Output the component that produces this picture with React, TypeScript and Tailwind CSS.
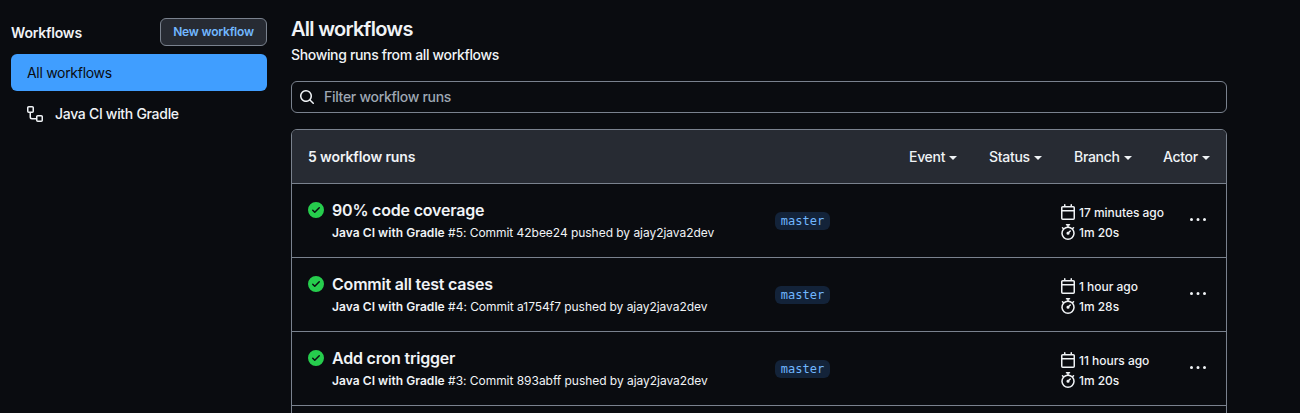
import React from "react";

const PATHS = {
  workflow:
    "M0 1.75C0 .784.784 0 1.75 0h3.5C6.216 0 7 .784 7 1.75v3.5A1.75 1.75 0 015.25 7H4v4a1 1 0 001 1h4v-1.25C9 9.784 9.784 9 10.75 9h3.5c.966 0 1.75.784 1.75 1.75v3.5A1.75 1.75 0 0114.25 16h-3.5A1.75 1.75 0 019 14.25v-.75H5A2.5 2.5 0 012.5 11V7h-.75A1.75 1.75 0 010 5.25v-3.5zm1.75-.25a.25.25 0 00-.25.25v3.5c0 .138.112.25.25.25h3.5a.25.25 0 00.25-.25v-3.5a.25.25 0 00-.25-.25h-3.5zm9 9a.25.25 0 00-.25.25v3.5c0 .138.112.25.25.25h3.5a.25.25 0 00.25-.25v-3.5a.25.25 0 00-.25-.25h-3.5z",
  search:
    "M11.5 7a4.499 4.499 0 11-8.998 0A4.499 4.499 0 0111.5 7zm-.82 4.74a6 6 0 111.06-1.06l3.04 3.04a.75.75 0 11-1.06 1.06l-3.04-3.04z",
  check:
    "M8 16A8 8 0 108 0a8 8 0 000 16zm3.78-9.72a.75.75 0 00-1.06-1.06L6.75 9.19 5.28 7.72a.75.75 0 00-1.06 1.06l2 2a.75.75 0 001.06 0l4.5-4.5z",
  calendar:
    "M4.75 0a.75.75 0 01.75.75V2h5V.75a.75.75 0 011.5 0V2h1.25c.966 0 1.75.784 1.75 1.75v10.5A1.75 1.75 0 0113.25 16H2.75A1.75 1.75 0 011 14.25V3.75C1 2.784 1.784 2 2.75 2H4V.75A.75.75 0 014.75 0zm-2 3.5h10.5a.25.25 0 01.25.25V6h-11V3.75a.25.25 0 01.25-.25zM2.5 7.5v6.75c0 .138.112.25.25.25h10.5a.25.25 0 00.25-.25V7.5h-11z",
  stopwatch:
    "M5.75.75A.75.75 0 016.5 0h3a.75.75 0 010 1.5h-.75v1l-.001.041a6.718 6.718 0 013.464 1.435l.007-.006.75-.75a.75.75 0 111.06 1.06l-.75.75-.006.007a6.75 6.75 0 11-10.548 0L2.72 5.03l-.75-.75a.75.75 0 011.06-1.06l.75.75.007.006A6.718 6.718 0 017.25 2.541a.756.756 0 010-.041v-1H6.5a.75.75 0 01-.75-.75zM8 14.5A5.25 5.25 0 108 4a5.25 5.25 0 000 10.5zm.389-6.7l1.33-1.33a.75.75 0 111.061 1.06L9.45 8.861A1.502 1.502 0 018 10.75a1.5 1.5 0 11.389-2.95z",
  kebab:
    "M8 9a1.5 1.5 0 100-3 1.5 1.5 0 000 3zM1.5 9a1.5 1.5 0 100-3 1.5 1.5 0 000 3zm13 0a1.5 1.5 0 100-3 1.5 1.5 0 000 3z",
};

function Icon({ name, className = "" }: { name: keyof typeof PATHS; className?: string }) {
  return (
    <svg viewBox="0 0 16 16" className={`size-4 shrink-0 fill-current ${className}`} aria-hidden="true">
      <path fillRule="evenodd" d={PATHS[name]} />
    </svg>
  );
}

function Filter({ label, className }: { label: string; className: string }) {
  return (
    <button className={`flex items-center gap-1 text-left text-sm ${className}`}>
      <span className="tracking-[-0.3px]">{label}</span>
      <svg viewBox="0 0 8 4" className="mt-0.5 h-1 w-2 fill-current" aria-hidden="true">
        <path d="M0 0h8L4 4z" />
      </svg>
    </button>
  );
}

interface Run {
  title: string;
  number: number;
  sha: string;
  when: string;
  duration: string;
}

const RUNS: Run[] = [
  { title: "90% code coverage", number: 5, sha: "42bee24", when: "17 minutes ago", duration: "1m 20s" },
  { title: "Commit all test cases", number: 4, sha: "a1754f7", when: "1 hour ago", duration: "1m 28s" },
  { title: "Add cron trigger", number: 3, sha: "893abff", when: "11 hours ago", duration: "1m 20s" },
];

function RunRow({ run }: { run: Run }) {
  return (
    <li className="flex h-[74px] border-b border-[#7a828e] pl-4">
      <Icon name="check" className="mt-[18px] text-[#26cd4d]" />
      <div className="w-[443px] shrink-0 pt-[14px] pl-2 whitespace-nowrap">
        <h3 className="text-base leading-6 font-semibold tracking-[-0.2px]">{run.title}</h3>
        <p className="mt-0.5 text-xs leading-[18px] font-normal tracking-[-0.04px]">
          <span className="font-semibold tracking-[0.05px]">Java CI with Gradle</span> #{run.number}: Commit{" "}
          {run.sha} pushed by ajay2java2dev
        </p>
      </div>
      <div className="w-[293px] shrink-0 pt-7 pl-2">
        <span className="flex h-[18px] w-[55px] items-center justify-center rounded-md bg-[#132339] font-['DejaVu_Sans_Mono',monospace] text-xs text-[#71b7ff]">
          master
        </span>
      </div>
      <div className="flex w-[130px] shrink-0 flex-col pt-[18px] text-xs whitespace-nowrap">
        <div className="flex h-5 items-center gap-[3px]">
          <Icon name="calendar" />
          <span className="pt-0.5 leading-4 tracking-[-0.03px]">{run.when}</span>
        </div>
        <div className="flex h-5 items-center gap-[3px]">
          <Icon name="stopwatch" />
          <span className="pt-0.5 leading-4 tracking-[-0.03px]">{run.duration}</span>
        </div>
      </div>
      <Icon name="kebab" className="mt-7" />
    </li>
  );
}

export default function App() {
  return (
    <div className="flex h-[413px] w-[1300px] overflow-hidden bg-[#0a0c10] font-[Inter,sans-serif] text-sm font-[450] text-[#f0f3f6]">
      <aside className="ml-[11px] w-64 shrink-0 pt-[18px]">
        <div className="flex h-7 items-center justify-between">
          <h2 className="pt-0.5 font-semibold tracking-[-0.2px]">Workflows</h2>
          <button className="flex h-7 w-[107px] items-center justify-center rounded-md border border-[#7a828e] bg-[#272b33] text-xs font-semibold tracking-[-0.2px] whitespace-nowrap text-[#71b7ff]">
            New workflow
          </button>
        </div>
        <nav className="mt-2">
          <a className="flex h-[37px] items-center rounded-md bg-[#409eff] pl-4 font-normal text-[#0a0c10]">
            <span className="tracking-[-0.3px]">All workflows</span>
          </a>
          <a className="mt-1 flex h-[37px] items-center gap-3 pl-4">
            <Icon name="workflow" />
            <span className="tracking-[-0.3px]">Java CI with Gradle</span>
          </a>
        </nav>
      </aside>
      <main className="ml-6 w-[936px] shrink-0 pt-[14px]">
        <h1 className="text-xl leading-[30px] font-semibold tracking-[-0.72px]">All workflows</h1>
        <p className="leading-[21px] tracking-[-0.34px]">Showing runs from all workflows</p>
        <div className="mt-4 flex h-8 items-center rounded-md border border-[#7a828e] pl-[7px]">
          <Icon name="search" />
          <span className="ml-[9px] tracking-[-0.3px] text-[#9ea7b3]">Filter workflow runs</span>
        </div>
        <section className="mt-4 h-[400px] overflow-hidden rounded-md border border-[#7a828e]">
          <header className="flex h-[54px] items-center border-b border-[#7a828e] bg-[#272b33] pl-4">
            <h2 className="w-[601px] shrink-0 font-semibold tracking-[-0.13px]">5 workflow runs</h2>
            <Filter label="Event" className="w-20" />
            <Filter label="Status" className="w-[85px]" />
            <Filter label="Branch" className="w-[89px]" />
            <Filter label="Actor" className="" />
          </header>
          <ul>
            {RUNS.map((run) => (
              <RunRow key={run.number} run={run} />
            ))}
          </ul>
        </section>
      </main>
    </div>
  );
}
